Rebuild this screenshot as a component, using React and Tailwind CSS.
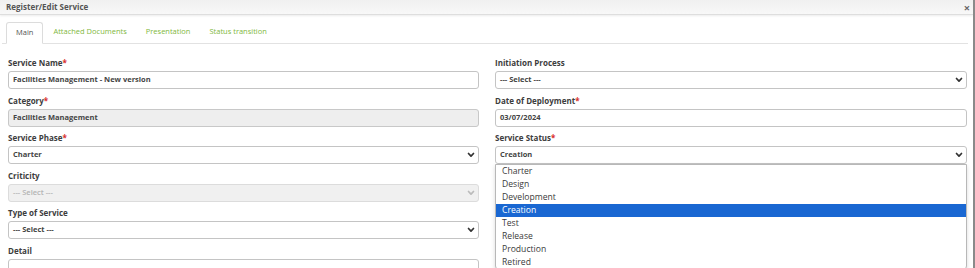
import React from "react";

function Chevron({ light }) {
  return (
    <svg width="8" height="6" viewBox="0 0 8 6" className="shrink-0">
      <polyline points="1.5,1.5 4,4.2 6.5,1.5" fill="none" stroke={light ? "#bbb" : "#333"} strokeWidth="1.7" strokeLinecap="round" strokeLinejoin="round" />
    </svg>
  );
}

function Label({ text, req }) {
  return (
    <div className="h-[10px] leading-[10px] text-[8px] font-bold text-[#3d3d3d] mb-[3px] whitespace-nowrap">
      {text}
      {req && <span className="text-[#d9302c]">*</span>}
    </div>
  );
}

function Box({ value, select, disabled, gray, children }) {
  return (
    <div
      className={
        "relative h-[18px] rounded-[3px] border flex items-center justify-between pl-[4px] pr-[3px] " +
        (disabled
          ? "bg-[#f0f0f0] border-[#dcdcdc]"
          : gray
          ? "bg-[#eeeeee] border-[#c8c8c8]"
          : "bg-white border-[#c4c4c4]")
      }
    >
      <span
        className={
          "text-[7.5px] font-bold whitespace-nowrap " +
          (disabled ? "text-[#b4b4b4] font-semibold" : "text-[#444]")
        }
      >
        {value}
      </span>
      {select && <Chevron light={disabled} />}
      {children}
    </div>
  );
}

function Field({ label, req, ...rest }) {
  return (
    <div className="mb-[6.5px]">
      <Label text={label} req={req} />
      <Box {...rest} />
    </div>
  );
}

const options = ["Charter", "Design", "Development", "Creation", "Test", "Release", "Production", "Retired"];

export default function App() {
  return (
    <div className="w-[975px] h-[268px] overflow-hidden bg-white border-r-2 border-[#8a8a8a] font-['Open_Sans',sans-serif]">
      <div className="h-[15px] flex items-center justify-between pl-[6px] pr-[3px] bg-gradient-to-b from-[#f0f0f0] to-[#f8f8f8] border-b border-[#dedede] shadow-[0_1px_2px_rgba(0,0,0,0.08)]">
        <span className="text-[8px] font-bold text-[#555] leading-none">Register/Edit Service</span>
        <span className="text-[11px] font-bold text-[#666] leading-none">×</span>
      </div>

      <div className="mt-[7px] mx-[2px] w-[966px] h-[22px] border-b border-[#e2e2e2] flex items-end pl-[4px]">
        <div className="h-[22px] px-[9px] flex items-center border border-[#dcdcdc] border-b-white rounded-t-[3px] bg-white mb-[-1px] text-[7.5px] text-[#555]">
          Main
        </div>
        <div className="h-[22px] pl-[10px] pr-[10px] flex items-center text-[7.5px] text-[#7fb83e]">Attached Documents</div>
        <div className="h-[22px] px-[9px] flex items-center text-[7.5px] text-[#7fb83e]">Presentation</div>
        <div className="h-[22px] px-[10px] flex items-center text-[7.5px] text-[#7fb83e]">Status transition</div>
      </div>

      <div className="grid grid-cols-[471px_472px] gap-x-[16px] pl-[8px] mt-[14px]">
        <div>
          <Field label="Service Name" req value="Facilities Management - New version" />
          <Field label="Category" req value="Facilities Management" gray />
          <Field label="Service Phase" req value="Charter" select />
          <Field label="Criticity" value="--- Select ---" select disabled />
          <Field label="Type of Service" value="--- Select ---" select />
          <Field label="Detail" value="" />
        </div>
        <div>
          <Field label="Initiation Process" value="--- Select ---" select />
          <Field label="Date of Deployment" req value="03/07/2024" />
          <div className="mb-[6.5px]">
            <Label text="Service Status" req />
            <Box value="Creation" select>
              <div className="absolute left-[-1px] right-[-1px] top-[17px] bg-white border border-[#b8b8b8] rounded-b-[4px] shadow-[0_2px_4px_rgba(0,0,0,0.15)] z-10">
                {options.map((o) => (
                  <div
                    key={o}
                    className={
                      "h-[13px] leading-[13px] pl-[6px] text-[8.6px] " +
                      (o === "Creation" ? "bg-[#1967d2] text-white" : "text-[#3a3a3a]")
                    }
                  >
                    {o}
                  </div>
                ))}
              </div>
            </Box>
          </div>
        </div>
      </div>
    </div>
  );
}
